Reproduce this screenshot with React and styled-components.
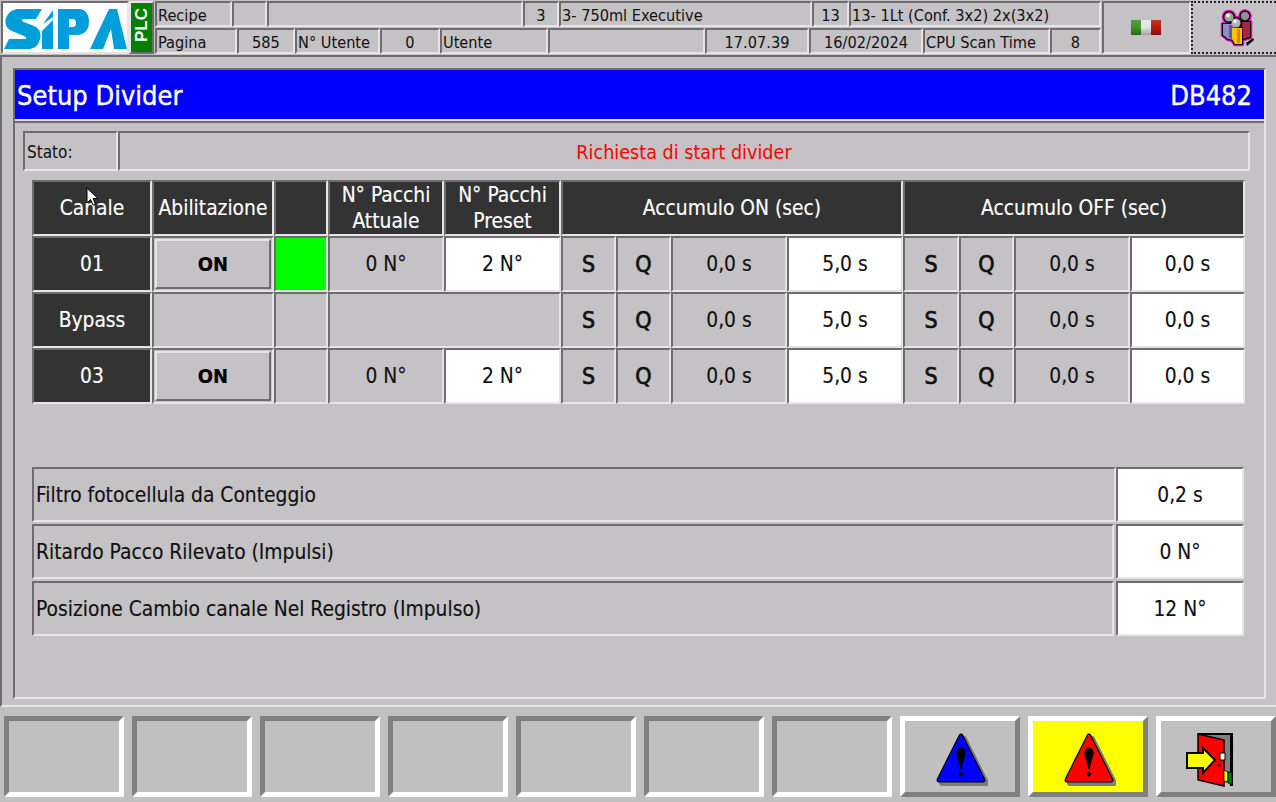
import React from 'react'
import styled, { createGlobalStyle } from 'styled-components'

const GREY = '#c4c2c4'
const DARK = '#6e6c6e'
const LIGHT = '#e6e4e6'

const GlobalStyle = createGlobalStyle`
  * { box-sizing: border-box; }
  html, body { margin: 0; padding: 0; overflow: hidden; }
  body {
    background: ${GREY};
    font-family: "DejaVu Sans Condensed", "DejaVu Sans", sans-serif;
    color: #111;
  }
`

const Page = styled.div`
  position: relative;
  width: 1276px;
  height: 802px;
  display: flex;
  flex-direction: column;
  background: ${GREY};
  overflow: hidden;
`

const TopBar = styled.header`
  height: 55px;
  display: flex;
  padding: 1px 0 0 1px;
`

const LogoBox = styled.div`
  width: 128px;
  height: 53px;
  background: #fff;
  border: 2px solid;
  border-color: ${DARK} ${LIGHT} ${LIGHT} ${DARK};
  svg { display: block; }
`

const PlcBadge = styled.div`
  width: 25px;
  height: 53px;
  background: #008000;
  border: 2px solid;
  border-color: ${DARK} ${LIGHT} ${LIGHT} ${DARK};
  color: #fff;
  font-family: "Liberation Sans", sans-serif;
  font-weight: 700;
  font-size: 17px;
  writing-mode: vertical-rl;
  transform: rotate(180deg);
  display: flex;
  align-items: center;
  justify-content: center;
  padding-top: 4px;
`

const HeaderRows = styled.div`
  width: 946px;
  margin-left: 1px;
  display: flex;
  flex-direction: column;
  gap: 1px;
`

const HeaderRow = styled.div`
  display: grid;
  grid-template-columns: ${(p) => p.$columns};
  height: 26px;
`

const HeaderCell = styled.div`
  border: 2px solid;
  border-color: ${DARK} ${LIGHT} ${LIGHT} ${DARK};
  font-size: 16.2px;
  line-height: 25px;
  padding: 0 1px;
  white-space: nowrap;
  overflow: hidden;
  text-align: ${(p) => (p.$center ? 'center' : 'left')};
`

const FlagCell = styled.div`
  width: 89px;
  height: 53px;
  margin-left: 1px;
  border: 2px solid;
  border-color: ${DARK} ${LIGHT} ${LIGHT} ${DARK};
  display: flex;
  align-items: center;
  justify-content: center;
`

const Flag = styled.div`
  width: 30px;
  height: 15px;
  margin-right: 1px;
  background:
    linear-gradient(180deg, rgba(255, 255, 255, 0.12), rgba(0, 0, 0, 0) 50%, rgba(0, 0, 0, 0.3)),
    linear-gradient(90deg, #3d9420 0 33%, #e4e4e4 33% 66%, #b81c10 66%);
`

const UsersCell = styled.div`
  flex: 1;
  height: 53px;
  border: 2px dotted #222;
  border-right: none;
  display: flex;
  align-items: center;
  justify-content: center;
  padding-left: 4px;
`

const MainPanel = styled.main`
  height: 652px;
  border-top: 2px solid ${DARK};
  border-left: 2px solid ${DARK};
  border-bottom: 2px solid ${LIGHT};
  padding: 11px 0 6px 11px;
`

const Frame = styled.section`
  width: 1253px;
  height: 631px;
  border: 2px solid;
  border-color: ${DARK} ${LIGHT} ${LIGHT} ${DARK};
  display: flex;
  flex-direction: column;
`

const TitleBar = styled.div`
  height: 51px;
  flex: none;
  background: #0000ff;
  border-bottom: 2px solid ${LIGHT};
  color: #fff;
  font-size: 27px;
  -webkit-text-stroke: 0.4px #fff;
  display: flex;
  align-items: center;
  justify-content: space-between;
  padding: 2px 12px 0 2px;
`

const Content = styled.div`
  flex: 1;
  border-top: 2px solid ${DARK};
  padding: 8px 14px 0 8px;
`

const StatusRow = styled.div`
  display: grid;
  grid-template-columns: 95px 1fr;
  height: 40px;
`

const StatusCell = styled.div`
  border: 2px solid;
  border-color: ${DARK} ${LIGHT} ${LIGHT} ${DARK};
  display: flex;
  align-items: center;
  padding: 2px 2px 0;
  font-size: ${(p) => (p.$alert ? '19.6px' : '17px')};
  color: ${(p) => (p.$alert ? '#ff0000' : '#111')};
  justify-content: ${(p) => (p.$alert ? 'center' : 'flex-start')};
`

const Table = styled.div`
  margin: 9px 0 0 9px;
  display: grid;
  grid-template-columns: 120px 122px 54px 116px 117px 55px 55px 116px 116px 56px 55px 116px 115px;
  grid-auto-rows: 56px;
`

const toneColors = {
  dark: { bg: '#333333', fg: '#ffffff' },
  grey: { bg: GREY, fg: '#111' },
  white: { bg: '#ffffff', fg: '#111' },
  green: { bg: '#00ff00', fg: '#111' },
}

const Cell = styled.div`
  grid-column: span ${(p) => p.$span || 1};
  border: 2px solid;
  border-color: ${DARK} ${LIGHT} ${LIGHT} ${DARK};
  background: ${(p) => toneColors[p.$tone || 'grey'].bg};
  color: ${(p) => toneColors[p.$tone || 'grey'].fg};
  font-size: ${(p) => (p.$strong ? '23px' : '20.8px')};
  -webkit-text-stroke: ${(p) => (p.$strong ? '0.7px' : '0.15px')};
  line-height: 26px;
  display: flex;
  align-items: center;
  justify-content: center;
  text-align: center;
  white-space: pre-line;
`

const ToggleCell = styled(Cell)`
  padding: 1px;
`

const ToggleButton = styled.button`
  width: 100%;
  height: 100%;
  background: ${GREY};
  border: 2px solid;
  border-color: ${LIGHT} ${DARK} ${DARK} ${LIGHT};
  font-family: inherit;
  font-size: 20px;
  font-weight: 700;
  color: #000;
  padding: 0;
`

const Params = styled.div`
  margin: 63px 0 0 9px;
  width: 1212px;
  display: flex;
  flex-direction: column;
  gap: 2px;
`

const ParamRow = styled.div`
  display: grid;
  grid-template-columns: ${(p) => p.$label}px 1fr;
  height: 55px;
  column-gap: ${(p) => 1084 - p.$label}px;
`

const ParamLabel = styled(Cell)`
  justify-content: flex-start;
  padding-left: 2px;
`

const Footer = styled.footer`
  flex: 1;
  background: #c0c0c0;
  display: flex;
  gap: 8px;
  padding: 9px 0 5px 4px;
`

const FooterButton = styled.button`
  width: 120px;
  height: 81px;
  flex: none;
  padding: 0;
  border: 5px solid;
  border-color: ${(p) =>
    p.$raised ? '#ffffff #808080 #808080 #ffffff' : '#808080 #ffffff #ffffff #808080'};
  background: ${(p) => p.$fill || '#c0c0c0'};
  display: flex;
  align-items: center;
  justify-content: center;
`

const ExitGlyph = styled.svg`
  margin: 7px 12px 0 0;
`

const MouseCursor = styled.svg`
  position: absolute;
  left: 86px;
  top: 187px;
`

function SipaLogo() {
  return (
    <svg width="124" height="49" viewBox="2 2 124 49" fill="#009ed8">
      <path d="M18 8H41L35 18H24C20 18 20 20 23 21L33 25C40 28 41 35 38 41C36 46 32 48 27 48H3L8 38H23C26 38 26 36 23 35L11 30C4 27 3 20 6 15C9 10 13 8 18 8Z" />
      <path d="M41 30L52 19V48H41Z" />
      <path d="M42 23L52 9V16Z" />
      <path
        fillRule="evenodd"
        d="M57 8H78C85 8 88 14 88 21C88 29 83 34 76 34H68V48H57ZM68 18V26H72C76 26 76 18 72 18Z"
      />
      <path d="M89 48L108 8H116L126 48H113L110 28L102 48Z" />
    </svg>
  )
}

function UsersIcon() {
  const shapes = (
    <>
      <path d="M23 13H31V28L24 30Z" />
      <path d="M4 15H15V31L9 30L4 26Z" />
      <path d="M13 19H23V35H16L13 30Z" />
      <circle cx="10" cy="8" r="5" />
      <circle cx="26" cy="7" r="4.5" />
      <circle cx="17" cy="14" r="5" />
    </>
  )
  return (
    <svg width="36" height="38" viewBox="0 0 36 38">
      <g fill="#e000c0" stroke="#e000c0" strokeWidth="4.5" strokeLinejoin="round">{shapes}</g>
      <g fill="#000" stroke="#000" strokeWidth="2" strokeLinejoin="round">{shapes}</g>
      <path d="M23 13H31V28L24 30Z" fill="#a8283c" />
      <path d="M4 15H15V31L9 30L4 26Z" fill="#8c8cc8" />
      <path d="M10 16H15V30L10 29Z" fill="#5c5c90" />
      <path d="M13 19H23V35H16L13 30Z" fill="#f8c400" />
      <path d="M18 20H21V34H18Z" fill="#f07800" />
      <path d="M27 34L34 29L35 31L28 37Z" fill="#000" />
      <circle cx="10" cy="8" r="4.6" fill="#a0a0a0" />
      <circle cx="9" cy="6.5" r="2" fill="#eee" />
      <circle cx="26" cy="7" r="4.2" fill="#909090" />
      <circle cx="17" cy="14" r="4.6" fill="#b0b0b0" />
      <circle cx="16" cy="12.5" r="2" fill="#eee" />
    </svg>
  )
}

function AlertIcon({ color }) {
  const shape = 'M29 5L51 49H7Z'
  return (
    <svg width="56" height="58" viewBox="0 -3 56 58">
      <path d={shape} transform="translate(3 3)" fill="#7c7c7c" stroke="#7c7c7c" strokeWidth="6" strokeLinejoin="round" />
      <path d={shape} fill={color} stroke="#000" strokeWidth="5" strokeLinejoin="round" />
      <path d={shape} fill={color} stroke={color} strokeWidth="2.5" strokeLinejoin="round" />
      <path d="M24.5 22C24.5 15 33.5 15 33.5 22C33.5 27 30 32 29.8 38H28.2C28 32 24.5 27 24.5 22Z" fill="#000" />
      <path d="M29 40L31.5 43L29 46L26.5 43Z" fill="#000" />
    </svg>
  )
}

function ExitIcon() {
  return (
    <ExitGlyph width="48" height="54" viewBox="0 0 48 54">
      <path d="M18 2H45V50H38Z" fill="#808080" />
      <path d="M12 0H47V53H44V2H12Z" fill="#000" />
      <path d="M12 1L38 7V53L12 47Z" fill="#ff0000" stroke="#000" strokeWidth="1.5" />
      <path d="M38 37L42 39V49L38 48Z" fill="#ffff00" stroke="#000" strokeWidth="0.8" />
      <path d="M42 39H46V52L42 50Z" fill="#008000" stroke="#000" strokeWidth="0.8" />
      <path d="M1 20H17V15L29 27L17 40V35H1Z" fill="#ffff00" stroke="#000" strokeWidth="2" />
      <path d="M34 20H39V27H34Z" fill="#fff" stroke="#000" />
      <circle cx="33" cy="32" r="1.6" fill="#000" />
    </ExitGlyph>
  )
}

const timerCells = (onValue, offValue) => (
  <>
    <Cell $strong>S</Cell>
    <Cell $strong>Q</Cell>
    <Cell>0,0 s</Cell>
    <Cell $tone="white">{onValue}</Cell>
    <Cell $strong>S</Cell>
    <Cell $strong>Q</Cell>
    <Cell>0,0 s</Cell>
    <Cell $tone="white">{offValue}</Cell>
  </>
)

export default function App() {
  return (
    <Page>
      <GlobalStyle />
      <TopBar>
        <LogoBox>
          <SipaLogo />
        </LogoBox>
        <PlcBadge>PLC</PlcBadge>
        <HeaderRows>
          <HeaderRow $columns="77px 35px 256px 36px 253px 37px 252px">
            <HeaderCell>Recipe</HeaderCell>
            <HeaderCell />
            <HeaderCell />
            <HeaderCell $center>3</HeaderCell>
            <HeaderCell>3- 750ml Executive</HeaderCell>
            <HeaderCell $center>13</HeaderCell>
            <HeaderCell>13- 1Lt (Conf. 3x2) 2x(3x2)</HeaderCell>
          </HeaderRow>
          <HeaderRow $columns="82px 58px 85px 60px 108px 157px 104px 114px 127px 51px">
            <HeaderCell>Pagina</HeaderCell>
            <HeaderCell $center>585</HeaderCell>
            <HeaderCell>N° Utente</HeaderCell>
            <HeaderCell $center>0</HeaderCell>
            <HeaderCell>Utente</HeaderCell>
            <HeaderCell />
            <HeaderCell $center>17.07.39</HeaderCell>
            <HeaderCell $center>16/02/2024</HeaderCell>
            <HeaderCell>CPU Scan Time</HeaderCell>
            <HeaderCell $center>8</HeaderCell>
          </HeaderRow>
        </HeaderRows>
        <FlagCell>
          <Flag />
        </FlagCell>
        <UsersCell>
          <UsersIcon />
        </UsersCell>
      </TopBar>

      <MainPanel>
        <Frame>
          <TitleBar>
            <span>Setup Divider</span>
            <span>DB482</span>
          </TitleBar>
          <Content>
            <StatusRow>
              <StatusCell>Stato:</StatusCell>
              <StatusCell $alert>Richiesta di start divider</StatusCell>
            </StatusRow>

            <Table>
              <Cell $tone="dark">Canale</Cell>
              <Cell $tone="dark">Abilitazione</Cell>
              <Cell $tone="dark" />
              <Cell $tone="dark">{'N° Pacchi\nAttuale'}</Cell>
              <Cell $tone="dark">{'N° Pacchi\nPreset'}</Cell>
              <Cell $tone="dark" $span={4}>Accumulo ON (sec)</Cell>
              <Cell $tone="dark" $span={4}>Accumulo OFF (sec)</Cell>

              <Cell $tone="dark">01</Cell>
              <ToggleCell>
                <ToggleButton>ON</ToggleButton>
              </ToggleCell>
              <Cell $tone="green" />
              <Cell>0 N°</Cell>
              <Cell $tone="white">2 N°</Cell>
              {timerCells('5,0 s', '0,0 s')}

              <Cell $tone="dark">Bypass</Cell>
              <Cell />
              <Cell />
              <Cell $span={2} />
              {timerCells('5,0 s', '0,0 s')}

              <Cell $tone="dark">03</Cell>
              <ToggleCell>
                <ToggleButton>ON</ToggleButton>
              </ToggleCell>
              <Cell />
              <Cell>0 N°</Cell>
              <Cell $tone="white">2 N°</Cell>
              {timerCells('5,0 s', '0,0 s')}
            </Table>

            <Params>
              <ParamRow $label={1084}>
                <ParamLabel>Filtro fotocellula da Conteggio</ParamLabel>
                <Cell $tone="white">0,2 s</Cell>
              </ParamRow>
              <ParamRow $label={1082}>
                <ParamLabel>Ritardo Pacco Rilevato (Impulsi)</ParamLabel>
                <Cell $tone="white">0 N°</Cell>
              </ParamRow>
              <ParamRow $label={1082}>
                <ParamLabel>Posizione Cambio canale Nel Registro (Impulso)</ParamLabel>
                <Cell $tone="white">12 N°</Cell>
              </ParamRow>
            </Params>
          </Content>
        </Frame>
      </MainPanel>

      <Footer>
        {Array.from({ length: 7 }, (_, i) => (
          <FooterButton key={i} />
        ))}
        <FooterButton $raised>
          <AlertIcon color="#0000ff" />
        </FooterButton>
        <FooterButton $raised $fill="#ffff00">
          <AlertIcon color="#ff0000" />
        </FooterButton>
        <FooterButton $raised>
          <ExitIcon />
        </FooterButton>
      </Footer>

      <MouseCursor width="14" height="20" viewBox="0 0 14 20">
        <path d="M1 1V16L4.5 12.5L7 18L9.5 17L7 11.5H12Z" fill="#fff" stroke="#000" />
      </MouseCursor>
    </Page>
  )
}
